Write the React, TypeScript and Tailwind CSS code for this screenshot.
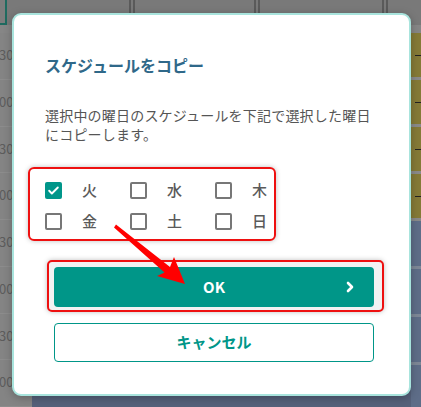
import React from 'react';

const days = [
    { label: '火', checked: true },
    { label: '水', checked: false },
    { label: '木', checked: false },
    { label: '金', checked: false },
    { label: '土', checked: false },
    { label: '日', checked: false },
];

const timeLabels = ['30', '00', '30', '00', '30', '00', '30', '00'];

function Checkbox({ checked }: { checked: boolean }) {
    if (checked) {
        return (
            <span className="w-[17px] h-[17px] rounded-[2px] bg-[#00968a] flex items-center justify-center">
                <svg width="13" height="13" viewBox="0 0 24 24" fill="none" stroke="white" strokeWidth="3.5" strokeLinecap="round" strokeLinejoin="round">
                    <path d="M4 12.5l5 5L20 6.5" />
                </svg>
            </span>
        );
    }
    return <span className="w-[17px] h-[17px] rounded-[2px] border-2 border-[#777]" />;
}

export default function App() {
    return (
        <div className="relative w-[421px] h-[407px] overflow-hidden bg-[#7a7a7a] font-['Noto_Sans_CJK_JP','Noto_Sans',sans-serif]">
            {/* BACKGROUND PAGE (dimmed) */}
            <div className="flex h-[25px] bg-[#797979]">
                <div className="w-[7px] border-r-2 border-b-2 border-[#1f6b60] bg-[#7d7d7d]" />
                <div className="w-[124px] border-r-2 border-[#5a5a5a]" />
                <div className="w-[2px]" />
                <div className="w-[123px] border-l-2 border-r-2 border-[#5a5a5a]" />
                <div className="w-[2px]" />
                <div className="w-[126px] border-l-2 border-r-2 border-[#5a5a5a]" />
                <div className="w-[2px]" />
                <div className="flex-1 border-l-2 border-[#5a5a5a]" />
            </div>
            <div className="h-[8px] bg-[#868686]" />
            <div className="flex h-[374px]">
                <div className="w-[32px] bg-[#848484] flex flex-col">
                    {timeLabels.map((t, i) => (
                        <div key={i} className="h-[48px] flex items-start border-b border-[#8c8c8c]">
                            <span className="text-[13px] leading-[16px] text-[#5c5c5c] mt-[14px] -ml-[1px]">{t}</span>
                        </div>
                    ))}
                </div>
                <div className="flex-1 bg-[#55617a]" />
                <div className="w-[10px] flex flex-col">
                    <div className="h-[189px] bg-[#857a37] flex flex-col">
                        {[0, 1, 2, 3].map(i => (
                            <div key={i} className="h-[47px] flex flex-col border-b-[3px] border-[#8a8a8a]">
                                <div className="h-[22px]" />
                                <div className="h-[1px] w-[6px] ml-[4px] bg-[#222]" />
                            </div>
                        ))}
                    </div>
                    <div className="flex-1 bg-[#5e6d88] flex flex-col">
                        {[0, 1, 2, 3].map(i => (
                            <div key={i} className="h-[48px] border-b-[3px] border-[#7d8796]" />
                        ))}
                    </div>
                </div>
            </div>

            {/* MODAL */}
            <div className="absolute left-[12px] top-[13px] w-[399px] h-[383px] bg-white border-2 border-[#a8e4dd] rounded-[9px] shadow-[0_2px_8px_rgba(0,0,0,0.25)]">
                <div className="pl-[31px] pt-[38px]">
                    <h2 className="text-[16px] leading-[24px] font-bold text-[#2f6889]">スケジュールをコピー</h2>
                    <p className="mt-[29px] text-[14px] leading-[19px] text-[#555] tracking-[0.2px]">
                        選択中の曜日のスケジュールを下記で選択した曜日
                        <br />
                        にコピーします。
                    </p>
                </div>

                <div className="ml-[14px] mt-[23px] w-[248px] border-2 border-[#ee1010] rounded-[6px] pt-[6px] pb-[2px] pl-[15px] shadow-[0_0_5px_rgba(0,0,0,0.25)] grid grid-cols-[85px_85px_1fr]">
                    {days.map(d => (
                        <div key={d.label} className="h-[31px] flex items-center">
                            <Checkbox checked={d.checked} />
                            <span className="ml-[20px] text-[15px] font-medium text-[#5a5a5a]">{d.label}</span>
                        </div>
                    ))}
                </div>

                <div className="ml-[33px] mt-[19px] w-[337px] h-[52px] border-2 border-[#ee1010] rounded-[5px] pl-[5px] pt-[5px] shadow-[0_0_5px_rgba(0,0,0,0.25)] bg-[#f2f2f2]">
                    <button className="relative w-[320px] h-[40px] rounded-[4px] bg-[#009688] text-white font-bold text-[15px] flex items-center justify-center">
                        OK
                        <svg className="absolute right-[19px]" width="10" height="12" viewBox="0 0 10 12" fill="none" stroke="white" strokeWidth="2.6" strokeLinecap="round" strokeLinejoin="round">
                            <path d="M3 2l4 4-4 4" />
                        </svg>
                    </button>
                </div>

                <button className="ml-[40px] mt-[11px] w-[320px] h-[39px] rounded-[4px] border border-[#009688] bg-white text-[#009688] font-bold text-[15px] flex items-center justify-center">
                    キャンセル
                </button>
            </div>

            {/* RED ARROW annotation */}
            <svg className="absolute left-0 top-0 pointer-events-none" width="421" height="407" viewBox="0 0 421 407">
                <polygon points="114,227.5 116,224.5 170,267 174,257 185,284 157,276 164.5,272.5" fill="#ff0000" />
            </svg>
        </div>
    );
}
